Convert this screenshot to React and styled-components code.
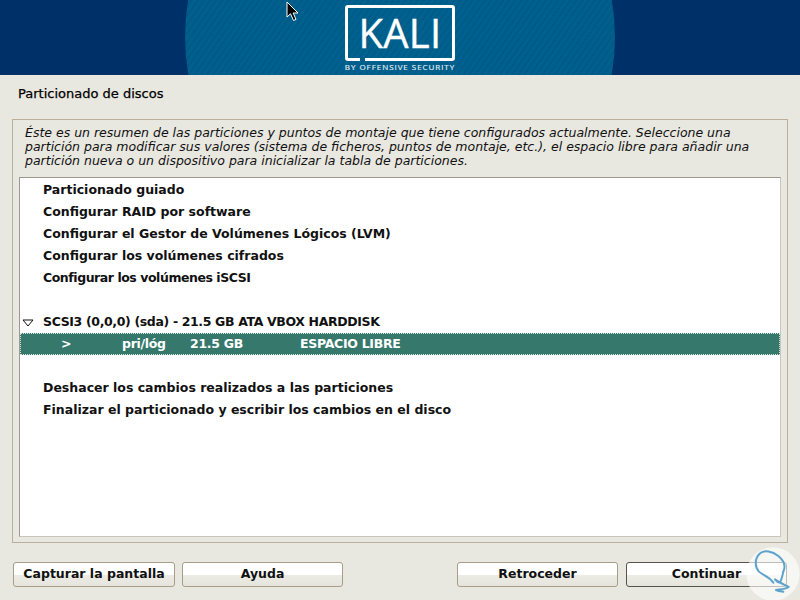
import styled, { createGlobalStyle } from "styled-components";

const menuTop = [
  { text: "Particionado guiado" },
  { text: "Configurar RAID por software" },
  { text: "Configurar el Gestor de Volúmenes Lógicos (LVM)" },
  { text: "Configurar los volúmenes cifrados" },
  { text: "Configurar los volúmenes iSCSI", spacing: "-0.45px" },
];

const menuBottom = [
  "Deshacer los cambios realizados a las particiones",
  "Finalizar el particionado y escribir los cambios en el disco",
];

const App = () => {
  return (
    <Page>
      <GlobalStyle />
      <Banner>
        <Glow />
        <LogoBox>
          <KaliFrame>
            <FrameGap />
            <KaliText>KALI</KaliText>
          </KaliFrame>
          <ByLine>BY OFFENSIVE SECURITY</ByLine>
        </LogoBox>
        <Cursor width="14" height="22" viewBox="0 0 14 22">
          <path
            d="M1 1 L1 16 L4.5 12.8 L7.5 19.5 L10 18.4 L7.2 12 L12 12 Z"
            fill="#000"
            stroke="#fff"
            strokeWidth="1"
          />
        </Cursor>
      </Banner>

      <Title>Particionado de discos</Title>

      <Frame>
        <Intro>
          Éste es un resumen de las particiones y puntos de montaje que tiene
          configurados actualmente. Seleccione una
          <br />
          partición para modificar sus valores (sistema de ficheros, puntos de
          montaje, etc.), el espacio libre para añadir una
          <br />
          partición nueva o un dispositivo para inicializar la tabla de
          particiones.
        </Intro>
        <ListBox>
          {menuTop.map((item) => (
            <Row key={item.text} $spacing={item.spacing}>
              {item.text}
            </Row>
          ))}
          <Row />
          <Row $spacing="-0.36px">
            <Arrow width="12" height="8" viewBox="0 0 12 8">
              <path d="M1 1 H11 L6 7 Z" fill="none" stroke="#111" strokeWidth="1" />
            </Arrow>
            SCSI3 (0,0,0) (sda) - 21.5 GB ATA VBOX HARDDISK
          </Row>
          <SelectedRow>
            <Cell $width="61px">&gt;</Cell>
            <Cell $width="68px">pri/lóg</Cell>
            <Cell $width="110px">21.5 GB</Cell>
            <Cell>ESPACIO LIBRE</Cell>
          </SelectedRow>
          <Row />
          {menuBottom.map((item) => (
            <Row key={item}>{item}</Row>
          ))}
        </ListBox>
      </Frame>

      <ButtonBar>
        <ButtonGroup>
          <Button $width="162px">Capturar la pantalla</Button>
          <Button $width="161px">Ayuda</Button>
        </ButtonGroup>
        <ButtonGroup>
          <Button $width="161px">Retroceder</Button>
          <Button $width="161px" $focused>
            Continuar
          </Button>
        </ButtonGroup>
      </ButtonBar>

      <Watermark width="54" height="54" viewBox="18 21 162 162">
        <circle cx="99" cy="102" r="80" fill="#fff" fillOpacity="0.62" />
        <path
          d="M130 95 C138 78 132 62 115 48 C98 34 72 28 58 42 C44 56 44 80 56 94 C68 106 86 108 100 128"
          fill="none"
          stroke="#5fa3cc"
          strokeWidth="6"
          strokeLinecap="round"
        />
        <path
          d="M130 95 C127 108 125 118 120 128 C112 128 108 122 105 118 C118 128 135 135 146 141 C135 148 120 148 108 150 C114 153 122 154 130 155"
          fill="none"
          stroke="#5fa3cc"
          strokeWidth="6"
          strokeLinecap="round"
          strokeLinejoin="round"
        />
      </Watermark>
    </Page>
  );
};

export default App;

const GlobalStyle = createGlobalStyle`
  html, body {
    margin: 0;
    padding: 0;
    background: #e8e7e0;
  }
`;

const Page = styled.div`
  position: relative;
  width: 800px;
  height: 600px;
  overflow: hidden;
  background: #e8e7e0;
  font-family: "DejaVu Sans", sans-serif;
  font-size: 13px;
  color: #111;
`;

const Banner = styled.header`
  position: relative;
  height: 75px;
  overflow: hidden;
  display: flex;
  justify-content: center;
  background: #003068;
`;

const Glow = styled.div`
  position: absolute;
  left: 185px;
  top: -178px;
  width: 430px;
  height: 430px;
  border-radius: 50%;
  background:
    repeating-linear-gradient(
      -55deg,
      rgba(0, 40, 80, 0.1) 0 2px,
      transparent 2px 5px
    ),
    radial-gradient(circle, #00628f 0%, #005f8d 70%, #00527f 100%);
`;

const LogoBox = styled.div`
  position: relative;
  width: 110px;
  margin-top: 5px;
  display: flex;
  flex-direction: column;
  align-items: center;
`;

const KaliFrame = styled.div`
  position: relative;
  box-sizing: border-box;
  width: 110px;
  height: 56px;
  border: 3px solid #fff;
  border-radius: 3px;
  display: flex;
  align-items: center;
  justify-content: center;
`;

const FrameGap = styled.span`
  position: absolute;
  left: 12px;
  bottom: -3px;
  width: 5px;
  height: 3px;
  background: #005f8d;
`;

const KaliText = styled.span`
  font-family: "Open Sans", sans-serif;
  font-size: 40px;
  line-height: 1;
  color: #fff;
  letter-spacing: 0.3px;
  -webkit-text-stroke: 0.4px #fff;
`;

const ByLine = styled.span`
  margin-top: 1px;
  font-family: "Open Sans", sans-serif;
  font-size: 8px;
  line-height: 9px;
  letter-spacing: 0.95px;
  color: #e4eff5;
  -webkit-text-stroke: 0.15px #e4eff5;
  white-space: nowrap;
`;

const Cursor = styled.svg`
  position: absolute;
  left: 286px;
  top: 1px;
`;

const Title = styled.h1`
  margin: 0;
  padding: 11px 0 0 18px;
  height: 34px;
  box-sizing: border-box;
  font-size: 13px;
  font-weight: 400;
  line-height: 16px;
  color: #000;
  -webkit-text-stroke: 0.25px #000;
`;

const Frame = styled.section`
  box-sizing: border-box;
  margin: 10px 12px 0;
  height: 424px;
  padding: 6px 6px 5px;
  border: 1px solid #bcb09c;
  display: flex;
  flex-direction: column;
`;

const Intro = styled.p`
  margin: 0 0 9px 6px;
  font-style: italic;
  font-size: 12.5px;
  line-height: 14px;
  white-space: nowrap;
  color: #111;
`;

const ListBox = styled.div`
  box-sizing: border-box;
  flex: 1;
  padding-top: 1px;
  background: #fff;
  border: 1px solid #9c9a90;
  border-right-color: #c8c6bc;
  border-bottom-color: #c8c6bc;
`;

const Row = styled.div`
  position: relative;
  height: 22px;
  padding-left: 23px;
  line-height: 21px;
  font-weight: 700;
  font-size: 12.5px;
  white-space: nowrap;
  letter-spacing: ${(props) => props.$spacing || "0"};
  color: #111;
`;

const Arrow = styled.svg`
  position: absolute;
  left: 2px;
  top: 8px;
`;

const SelectedRow = styled.div`
  box-sizing: border-box;
  height: 22px;
  padding: 0 0 2px 41px;
  display: flex;
  align-items: center;
  background: #36786c;
  outline: 1px dotted #d4e4de;
  outline-offset: -1px;
  color: #fff;
  font-size: 12.5px;
  font-weight: 700;
  letter-spacing: -0.3px;
  white-space: nowrap;
`;

const Cell = styled.span`
  width: ${(props) => props.$width || "auto"};
`;

const ButtonBar = styled.footer`
  margin: 19px 13px 0;
  display: flex;
  justify-content: space-between;
`;

const ButtonGroup = styled.div`
  display: flex;
  gap: 7px;
  &:last-child {
    gap: 8px;
  }
`;

const Button = styled.button`
  box-sizing: border-box;
  width: ${(props) => props.$width};
  height: 25px;
  padding: 0 0 2px;
  border: 1px solid ${(props) => (props.$focused ? "#55534c" : "#a89e88")};
  border-radius: 3px;
  background: linear-gradient(
    to bottom,
    #ffffff 0,
    #ffffff 50%,
    #ecebe4 52%,
    #e6e5dd 100%
  );
  font-family: "DejaVu Sans", sans-serif;
  font-size: 12.5px;
  font-weight: 700;
  color: #111;
`;

const Watermark = styled.svg`
  position: absolute;
  left: 746px;
  top: 547px;
`;
